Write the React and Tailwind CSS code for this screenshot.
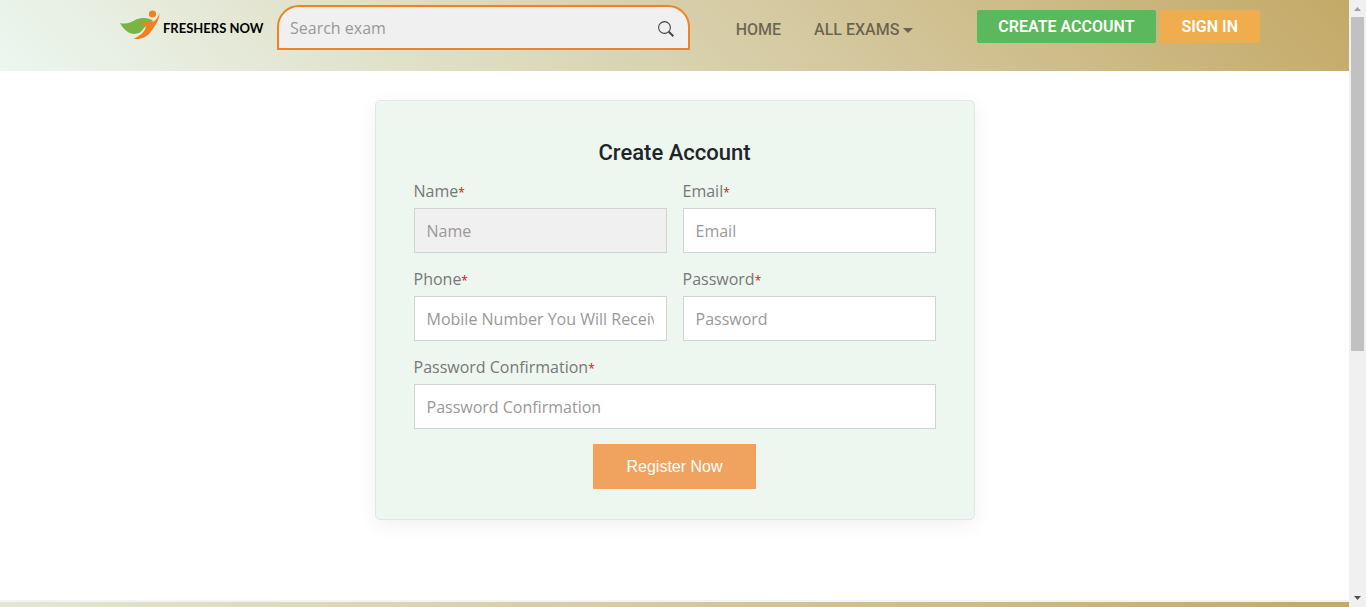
import React from "react";

function Logo() {
  return (
    <a href="#home" className="flex items-end gap-[3px] text-black">
      <svg viewBox="0 0 40 32" className="h-8 w-10" aria-hidden="true">
        <path
          d="M0 13C6 14.500 10 13 16 9.500C22 7 29 7.500 33.500 11C27 12.500 25 18 20 22.500C13 26 6 23.500 0 13Z"
          fill="#79b541"
        />
        <path
          d="M39.500 3C38.500 6 36.500 10 33.500 11.800C29 11 23.500 11.500 20.500 15.200C23.500 14.600 26.500 15.500 25.800 17.500C24 22.500 20 26 13.500 28.800C20 30 27 27.500 31 21.500C35 16 39.500 10 39.500 3Z"
          fill="#f08020"
        />
        <circle cx="32.500" cy="4" r="3.600" fill="#f08020" />
      </svg>
      <span className="w-[98px] whitespace-nowrap font-['Lato',sans-serif] text-[13px] leading-7 font-bold">
        FRESHERS NOW
      </span>
    </a>
  );
}

function Search() {
  return (
    <form
      role="search"
      className="flex h-[45px] min-w-0 flex-1 items-center rounded-t-[22px] border-2 border-[#f08224] bg-[#f0f0f0] pr-3.5 pl-[11px]"
    >
      <input
        type="search"
        aria-label="Search exam"
        placeholder="Search exam"
        className="min-w-0 flex-1 bg-transparent font-['Open_Sans',sans-serif] text-base outline-none placeholder:text-[#999]"
      />
      <button type="submit" aria-label="Search" className="mt-0.5">
        <svg viewBox="0 0 16 16" className="size-4" aria-hidden="true">
          <circle cx="6.500" cy="6.500" r="5.900" fill="none" stroke="#444" strokeWidth="1.100" />
          <path d="M10.800 10.800L15.400 15.200" stroke="#444" strokeWidth="2" />
        </svg>
      </button>
    </form>
  );
}

function Header() {
  return (
    <header className="flex h-[71px] items-start bg-linear-45 from-[#ecf7f0] to-[#c4a967] pt-[5px] pr-[89px] pl-[120px] font-['Roboto',sans-serif]">
      <div className="mt-[5px] mr-4 shrink-0">
        <Logo />
      </div>
      <Search />
      <nav className="mt-3 mr-16 ml-[46px] flex shrink-0 gap-[33px] leading-[26px] font-medium text-black/50">
        <a href="#home">HOME</a>
        <a href="#exams" className="flex items-center gap-1">
          ALL EXAMS
          <svg viewBox="0 0 10 5" className="h-[5px] w-2.5" aria-hidden="true">
            <path d="M0 0H10L5 5Z" fill="currentColor" />
          </svg>
        </a>
      </nav>
      <div className="mt-[5px] flex shrink-0 gap-1 font-semibold text-white">
        <a href="#register" className="flex h-[33px] items-center rounded-xs bg-[#5cb85c] px-[21px]">
          CREATE ACCOUNT
        </a>
        <a href="#login" className="flex h-[33px] items-center rounded-xs bg-[#f0ad4e] px-[22px]">
          SIGN IN
        </a>
      </div>
    </header>
  );
}

function Field({ id, label, type = "text", placeholder, inputClass = "bg-white", className = "" }) {
  return (
    <div className={className}>
      <label htmlFor={id} className="mb-[5px] block leading-6 text-[#777]">
        {label}
        <span className="text-xs text-[#f00]">*</span>
      </label>
      <input
        id={id}
        type={type}
        placeholder={placeholder}
        className={`block h-[45px] w-full border border-[#d3d3d3] px-3 outline-none placeholder:text-[#999] ${inputClass}`}
      />
    </div>
  );
}

function RegisterCard() {
  return (
    <form className="mx-auto w-full max-w-[600px] rounded-[5px] border border-[#e3e6e4] bg-[#edf7f0] px-[38px] pt-[39px] pb-[30px] font-['Open_Sans',sans-serif] text-base shadow-[0_5px_20px_rgba(0,0,0,0.06)]">
      <h1 className="mb-[13px] text-center font-['Roboto',sans-serif] text-[22px] leading-[26px] font-medium text-[#212529]">
        Create Account
      </h1>
      <div className="grid grid-cols-2 gap-x-4 gap-y-3.5">
        <Field id="name" label="Name" placeholder="Name" inputClass="bg-[#f0f0f0]" />
        <Field id="email" label="Email" type="email" placeholder="Email" />
        <Field id="phone" label="Phone" type="tel" placeholder="Mobile Number You Will Receive OTP" />
        <Field id="password" label="Password" type="password" placeholder="Password" />
        <Field
          id="confirm"
          label="Password Confirmation"
          type="password"
          placeholder="Password Confirmation"
          className="col-span-2"
        />
      </div>
      <button
        type="submit"
        className="mx-auto mt-[15px] block h-[45px] w-[163px] bg-[#f0a35e] font-['Liberation_Sans',sans-serif] text-white"
      >
        Register Now
      </button>
    </form>
  );
}

function ScrollRail() {
  return (
    <div className="flex w-[17px] shrink-0 flex-col items-center bg-[#f0f0f0]" aria-hidden="true">
      <svg viewBox="0 0 17 17" className="size-[17px]">
        <path d="M5 11H12L8.500 7Z" fill="#a0a0a0" />
      </svg>
      <div className="h-[55%] w-[13px] bg-[#c1c1c1]" />
      <svg viewBox="0 0 17 17" className="mt-auto size-[17px]">
        <path d="M5 6H12L8.500 10Z" fill="#505050" />
      </svg>
    </div>
  );
}

export default function App() {
  return (
    <div className="flex h-screen overflow-hidden bg-white">
      <div className="flex min-w-0 flex-1 flex-col">
        <Header />
        <main className="flex-1 border-b-2 border-[#f3f3f3] pt-[29px]">
          <RegisterCard />
        </main>
        <footer className="h-[5px] bg-linear-to-r from-[#e3e7d3] via-[#d5c89d] to-[#c4a967]" />
      </div>
      <ScrollRail />
    </div>
  );
}
